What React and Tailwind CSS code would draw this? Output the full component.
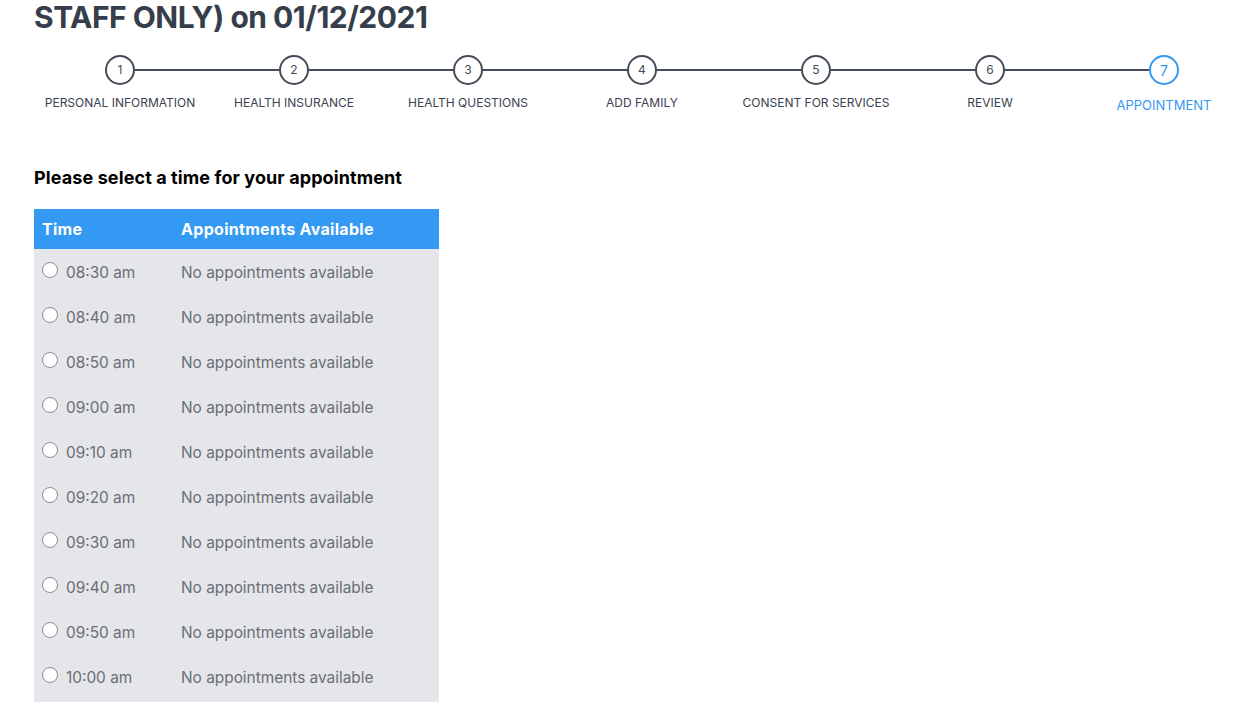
import React from "react";

const steps = [
  "PERSONAL INFORMATION",
  "HEALTH INSURANCE",
  "HEALTH QUESTIONS",
  "ADD FAMILY",
  "CONSENT FOR SERVICES",
  "REVIEW",
  "APPOINTMENT",
];

const times = [
  "08:30 am",
  "08:40 am",
  "08:50 am",
  "09:00 am",
  "09:10 am",
  "09:20 am",
  "09:30 am",
  "09:40 am",
  "09:50 am",
  "10:00 am",
];

export default function App() {
  return (
    <div
      className="w-[1257px] h-[702px] overflow-hidden bg-white"
      style={{ fontFamily: "Inter, 'Liberation Sans', sans-serif" }}
    >
      <div className="pl-[34px]">
        <h1 className="text-[30px] leading-[40px] font-bold text-[#363e4c] -mt-[3px] tracking-[-0.5px]">
          STAFF ONLY) on 01/12/2021
        </h1>
      </div>

      <div className="pl-[33px] mt-[18px] flex w-[1251px]">
        {steps.map((s, i) => {
          const active = i === steps.length - 1;
          return (
            <div key={s} className="relative flex-1 flex flex-col items-center">
              {i < steps.length - 1 && (
                <div className="absolute top-[14px] left-1/2 w-full h-[2px] bg-[#454c59]" />
              )}
              <div
                className={
                  "relative z-10 w-[30px] h-[30px] rounded-full border-2 bg-white flex items-center justify-center " +
                  (active
                    ? "border-[#3399f3] text-[#3399f3] text-[14px]"
                    : "border-[#454c59] text-[#454c59] text-[12px]")
                }
              >
                {i + 1}
              </div>
              <div
                className={
                  active
                    ? "mt-[12px] text-[13px] leading-[16px] text-[#3399f3]"
                    : "mt-[10px] text-[12px] leading-[16px] text-[#3a4150]"
                }
              >
                {s}
              </div>
            </div>
          );
        })}
      </div>

      <div className="pl-[34px] mt-[54px]">
        <h2 className="text-[18px] leading-[22px] font-bold text-black tracking-[0.1px]">
          Please select a time for your appointment
        </h2>

        <div className="mt-[20px] w-[405px] bg-[#e5e6ea]">
          <div className="h-[40px] bg-[#3399f3] flex items-center text-white font-bold text-[16px] tracking-[0.3px]">
            <div className="w-[147px] pl-[8px]">Time</div>
            <div>Appointments Available</div>
          </div>
          <div className="pt-[1px]">
            {times.map((t) => (
              <div key={t} className="h-[45px] flex items-center text-[15.4px] text-[#6b6e74]">
                <div className="w-[147px] pl-[8px] flex items-center">
                  <span className="w-[16px] h-[16px] rounded-full border border-[#8a8d93] bg-white mr-[8px] -mt-[5px] shrink-0" />
                  <span>{t}</span>
                </div>
                <div>No appointments available</div>
              </div>
            ))}
          </div>
          <div className="h-[30px]" />
        </div>
      </div>
    </div>
  );
}
